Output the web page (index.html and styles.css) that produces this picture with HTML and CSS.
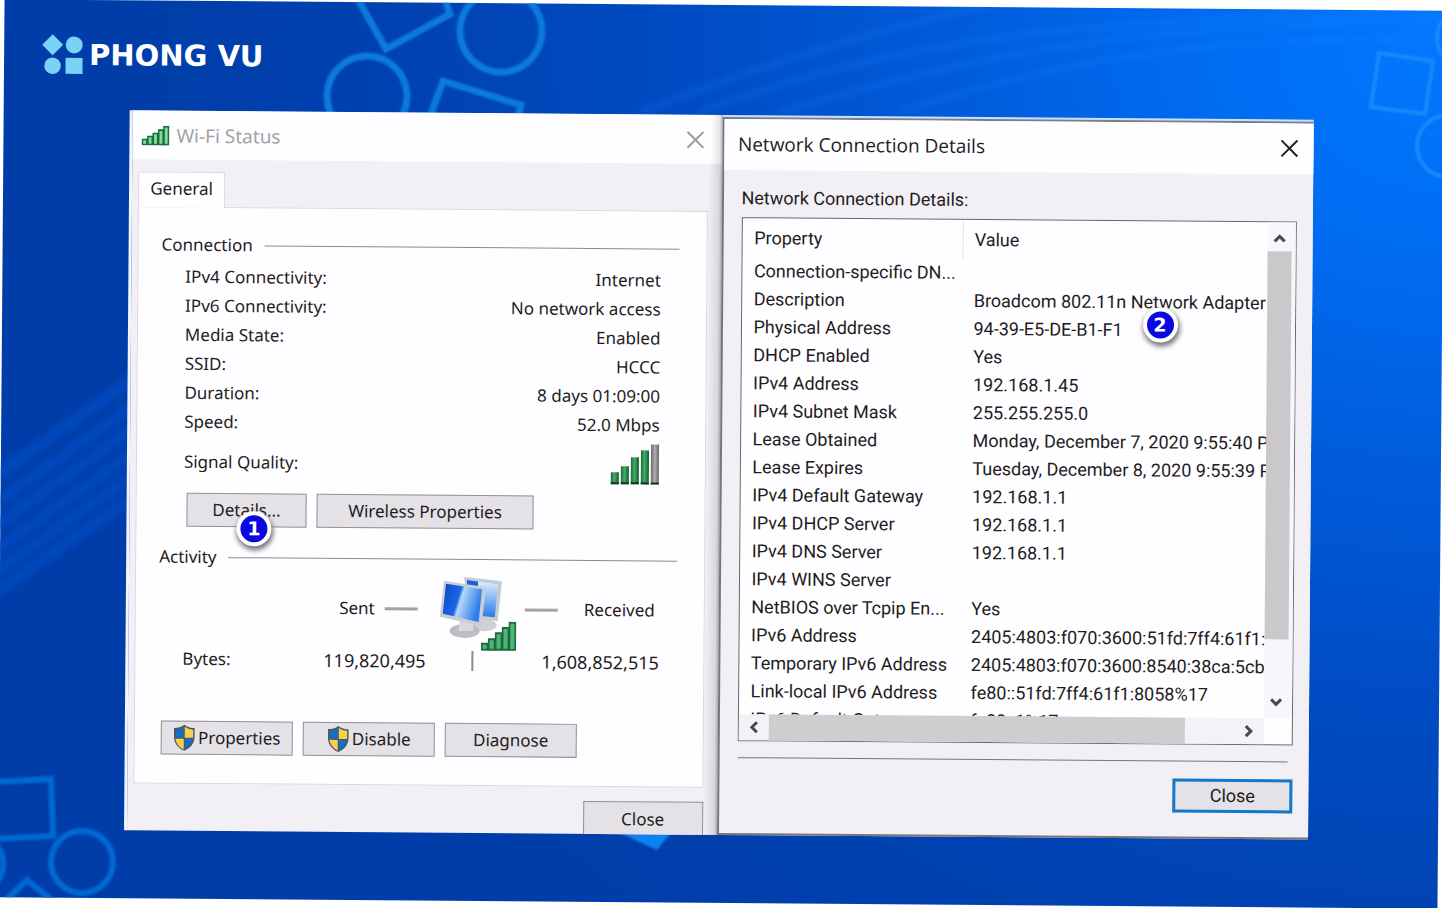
FILE: index.html
```html
<!DOCTYPE html>
<html lang="en">
<head>
<meta charset="utf-8">
<meta name="viewport" content="width=device-width, initial-scale=1">
<title>Phong Vu - Network Connection Details</title>
<link rel="stylesheet" href="styles.css">
</head>
<body>
<svg class="defs" width="0" height="0" aria-hidden="true">
  <symbol id="shield" viewBox="0 0 24 30">
    <path d="M12 1C9 3.500 5 4.500 1 4.500V14c0 7 4.500 12 11 15 6.500-3 11-8 11-15V4.500C19 4.500 15 3.500 12 1z" fill="#4a5560"/>
    <path d="M11.500 3C9 5 6 6 2.500 6.200V15h9z" fill="#1a6dbb"/>
    <path d="M12.500 3C15 5 18 6 21.500 6.200V15h-9z" fill="#fbcf4e"/>
    <path d="M2.600 16c.5 5 4 9 8.900 11.500V16z" fill="#fbcf4e"/>
    <path d="M21.400 16c-.5 5-4 9-8.900 11.500V16z" fill="#1a6dbb"/>
  </symbol>
  <symbol id="bars" viewBox="0 0 28 20">
    <g fill="#7fdc9c" stroke="#1c6b3c" stroke-width="1.600">
      <rect x="1" y="14" width="4.500" height="5"/>
      <rect x="6.400" y="11" width="4.500" height="8"/>
      <rect x="11.800" y="8" width="4.500" height="11"/>
      <rect x="17.200" y="4.500" width="4.500" height="14.500"/>
      <rect x="22.500" y="1" width="4.500" height="18"/>
    </g>
  </symbol>
</svg>

<main class="stage">
  <svg class="backdrop" viewBox="0 0 1440 898" preserveAspectRatio="xMidYMid slice" aria-hidden="true">
    <defs>
      <filter id="soft"><feGaussianBlur stdDeviation="1"/></filter>
      <filter id="softer"><feGaussianBlur stdDeviation="3"/></filter>
    </defs>
    <g transform="rotate(-0.45 720 449) translate(-1 -5)" fill="none">
      <g stroke="#0047bd" stroke-width="12" filter="url(#softer)">
        <path d="M-10 480L140 374M-10 507L140 401M-10 530L140 424M-10 554L140 448M-10 576L140 470M-10 596L140 492"/>
      </g>
      <g stroke="#1a86ff" stroke-width="6" opacity=".25" filter="url(#softer)">
        <path d="M640 112C800 50 960 5 1080 -10M700 112C880 45 1060 15 1442 15M780 112C960 60 1120 22 1442 22M900 112C1060 60 1200 35 1442 40"/>
      </g>
      <g stroke="#0879dd" stroke-width="7" filter="url(#soft)">
        <circle cx="367" cy="96" r="40"/>
        <circle cx="501" cy="31" r="41"/>
        <path d="M356 -4L386 49L450 14L444 -4"/>
        <path d="M428 122L443 81L521 105L517 122"/>
      </g>
      <g stroke="#1a88ff" stroke-width="4" filter="url(#soft)">
        <path d="M1379 53L1433 61L1425 114L1371 107Z"/>
        <circle cx="1448" cy="146" r="31"/>
        <circle cx="1468" cy="38" r="31"/>
      </g>
      <g stroke="#0069d4" stroke-width="6" filter="url(#soft)">
        <path d="M-6 782L51 779L53 836L-6 839"/>
        <circle cx="82" cy="862" r="31"/>
        <circle cx="-28" cy="864" r="31"/>
        <path d="M6 900L27 880L54 902"/>
      </g>
      <path d="M622 834L670 834L657 850Z" fill="#0c82f2" filter="url(#soft)"/>
    </g>
  </svg>

  <header class="brand">
    <svg class="brand-mark" viewBox="0 0 42 42" aria-hidden="true">
      <g fill="#7ad3f4">
        <path d="M10.500 0.500L21 11L10.500 21.500L0 11Z"/>
        <circle cx="32" cy="11" r="8.500"/>
        <circle cx="10.500" cy="32" r="8.300"/>
        <rect x="23.500" y="24" width="17" height="16"/>
      </g>
    </svg>
    <span class="brand-name">PHONG VU</span>
  </header>

  <div class="shots">
    <section class="win status" aria-label="Wi-Fi Status">
      <div class="titlebar">
        <svg class="title-icon" aria-hidden="true"><use href="#bars"/></svg>
        <h1 class="title muted">Wi-Fi Status</h1>
        <button class="x muted" type="button" aria-label="Close Wi-Fi Status"><svg viewBox="0 0 18 18"><path d="M1 1L17 17M17 1L1 17"/></svg></button>
      </div>
      <div class="status-body">
        <button class="tab" type="button">General</button>
        <div class="panel">
          <h2 class="group">Connection</h2>
          <dl class="facts">
            <div><dt>IPv4 Connectivity:</dt><dd>Internet</dd></div>
            <div><dt>IPv6 Connectivity:</dt><dd>No network access</dd></div>
            <div><dt>Media State:</dt><dd>Enabled</dd></div>
            <div><dt>SSID:</dt><dd>HCCC</dd></div>
            <div><dt>Duration:</dt><dd>8 days 01:09:00</dd></div>
            <div><dt>Speed:</dt><dd>52.0 Mbps</dd></div>
            <div class="signal"><dt>Signal Quality:</dt><dd>
              <svg class="quality" viewBox="0 0 50 42" role="img" aria-label="4 of 5 bars">
                <defs><linearGradient id="green"><stop offset="0" stop-color="#1c6b36"/><stop offset=".45" stop-color="#3fae68"/><stop offset="1" stop-color="#145a2c"/></linearGradient>
                <linearGradient id="grey"><stop offset="0" stop-color="#6a6a6a"/><stop offset=".5" stop-color="#b0aeb0"/><stop offset="1" stop-color="#666"/></linearGradient></defs>
                <g fill="url(#green)">
                  <rect x="1" y="29" width="8" height="12"/><rect x="11" y="23" width="8" height="18"/>
                  <rect x="21" y="14" width="8" height="27"/><rect x="31" y="7" width="8" height="34"/>
                </g>
                <rect x="41" y="1" width="8" height="40" fill="url(#grey)"/>
                <path d="M1 40h8M11 40h8M21 40h8M31 40h8M41 40h8" stroke="#12351f" stroke-width="2"/>
              </svg></dd></div>
          </dl>
          <div class="row details-row">
            <div class="marked">
              <button class="btn details" type="button">Details...</button>
              <span class="badge one">1</span>
            </div>
            <button class="btn wireless" type="button">Wireless Properties</button>
          </div>
          <h2 class="group activity">Activity</h2>
          <div class="traffic">
            <div class="side sent"><span>Sent</span><i></i></div>
            <svg class="computers" viewBox="0 0 78 76" aria-hidden="true">
              <defs>
                <linearGradient id="scr" x2="1" y2=".3"><stop offset="0" stop-color="#0b47cc"/><stop offset=".46" stop-color="#1c66e2"/><stop offset=".54" stop-color="#b4d8fb"/><stop offset="1" stop-color="#2f7dea"/></linearGradient>
                <linearGradient id="scr2" x2="0" y2="1"><stop offset="0" stop-color="#e2f2ff"/><stop offset="1" stop-color="#2a7be6"/></linearGradient>
              </defs>
              <ellipse cx="44" cy="49" rx="13" ry="6" fill="#cfcfd4"/>
              <path d="M24 1L62 5L58 45L30 42Z" fill="#c6cad2"/>
              <path d="M27 4L58 8L55 41L32 39Z" fill="url(#scr2)"/>
              <path d="M27 4L38 5.400L38 14L27 14Z" fill="#1f5fdc"/>
              <ellipse cx="25" cy="55" rx="15" ry="7" fill="#bdbcc2"/>
              <path d="M20 42h13l1 13H19z" fill="#d9d9dd"/>
              <path d="M4 5L46 11L42 50L0 41Z" fill="#c9cdd5"/>
              <path d="M6 8L42 13L39 46L3 38Z" fill="url(#scr)"/>
              <svg x="41" y="45" width="36" height="30" viewBox="0 0 28 20" preserveAspectRatio="none">
                <g fill="#4fb579" stroke="#1c6b3c" stroke-width="1.300">
                  <rect x="1" y="15" width="4.500" height="4"/><rect x="6.400" y="12" width="4.500" height="7"/>
                  <rect x="11.800" y="8" width="4.500" height="11"/><rect x="17.200" y="4.500" width="4.500" height="14.500"/>
                  <rect x="22.500" y="1" width="4.500" height="18"/>
                </g>
              </svg>
            </svg>
            <div class="side received"><i></i><span>Received</span></div>
          </div>
          <div class="bytes">
            <span class="bytes-label">Bytes:</span><span class="num">119,820,495</span><i class="bar"></i><span class="num">1,608,852,515</span>
          </div>
          <div class="row actions">
            <button class="btn" type="button"><svg class="shield" aria-hidden="true"><use href="#shield"/></svg>Properties</button>
            <button class="btn" type="button"><svg class="shield" aria-hidden="true"><use href="#shield"/></svg>Disable</button>
            <button class="btn" type="button">Diagnose</button>
          </div>
        </div>
        <button class="btn close-status" type="button">Close</button>
      </div>
    </section>

    <section class="win connection" aria-label="Network Connection Details">
      <div class="titlebar">
        <h1 class="title">Network Connection Details</h1>
        <button class="x" type="button" aria-label="Close Network Connection Details"><svg viewBox="0 0 18 18"><path d="M1 1L17 17M17 1L1 17"/></svg></button>
      </div>
      <div class="connection-body">
        <p class="list-label" id="list-label">Network Connection Details:</p>
        <div class="listbox">
          <div class="view">
            <table aria-labelledby="list-label">
              <thead><tr><th>Property</th><th>Value</th></tr></thead>
              <tbody>
                <tr><td>Connection-specific DN...</td><td></td></tr>
                <tr><td>Description</td><td>Broadcom 802.11n Network Adapter</td></tr>
                <tr><td>Physical Address</td><td>94-39-E5-DE-B1-F1<span class="badge two">2</span></td></tr>
                <tr><td>DHCP Enabled</td><td>Yes</td></tr>
                <tr><td>IPv4 Address</td><td>192.168.1.45</td></tr>
                <tr><td>IPv4 Subnet Mask</td><td>255.255.255.0</td></tr>
                <tr><td>Lease Obtained</td><td>Monday, December 7, 2020 9:55:40 PM</td></tr>
                <tr><td>Lease Expires</td><td>Tuesday, December 8, 2020 9:55:39 PM</td></tr>
                <tr><td>IPv4 Default Gateway</td><td>192.168.1.1</td></tr>
                <tr><td>IPv4 DHCP Server</td><td>192.168.1.1</td></tr>
                <tr><td>IPv4 DNS Server</td><td>192.168.1.1</td></tr>
                <tr><td>IPv4 WINS Server</td><td></td></tr>
                <tr><td>NetBIOS over Tcpip En...</td><td>Yes</td></tr>
                <tr><td>IPv6 Address</td><td>2405:4803:f070:3600:51fd:7ff4:61f1:8058</td></tr>
                <tr><td>Temporary IPv6 Address</td><td>2405:4803:f070:3600:8540:38ca:5cbb</td></tr>
                <tr><td>Link-local IPv6 Address</td><td>fe80::51fd:7ff4:61f1:8058%17</td></tr>
                <tr><td>IPv6 Default Gateway</td><td>fe80::1%17</td></tr>
              </tbody>
            </table>
          </div>
          <div class="vscroll">
            <svg viewBox="0 0 14 14"><path d="M2 10L7 5L12 10"/></svg>
            <span class="thumb"></span>
            <svg viewBox="0 0 14 14"><path d="M2 4L7 9L12 4"/></svg>
          </div>
          <div class="hscroll">
            <svg viewBox="0 0 14 14"><path d="M10 2L5 7L10 12"/></svg>
            <span class="thumb"></span>
            <svg viewBox="0 0 14 14"><path d="M4 2L9 7L4 12"/></svg>
          </div>
        </div>
        <hr class="rule">
        <button class="btn close-connection" type="button">Close</button>
      </div>
    </section>
  </div>
</main>
</body>
</html>
```
FILE: styles.css
```css
* { box-sizing: border-box; }

body {
  margin: 0;
  background: #fff;
  overflow: hidden;
  color: #1e1c22;
  font: 17px/28px "Noto Sans", sans-serif;
}

h1, h2, p, dl, dd { margin: 0; font: inherit; }
button { font: inherit; color: inherit; }
.defs { position: absolute; }

/* Slightly tilted poster */
.stage {
  position: relative;
  margin: 5px 1px;
  min-height: calc(100vh - 10px);
  overflow: hidden;
  transform: rotate(0.45deg);
  background: radial-gradient(ellipse 1500px 1300px at 100% 4%, #0078ff 0%, #006cf2 16%, #005cdc 32%, #004cc4 50%, #0042b2 68%, #003da8 88%);
}
.backdrop { position: absolute; inset: 0; width: 100%; height: 100%; }

.brand {
  position: relative;
  display: flex;
  align-items: center;
  gap: 5px;
  height: 110px;
  padding: 0 0 0 38px;
}
.brand-mark { width: 42px; height: 42px; }
.brand-name { color: #fff; font: bold 29px/32px "DejaVu Sans", sans-serif; }

.shots {
  position: relative;
  display: flex;
  margin: 0 130px 0 126px;
  height: 720px;
}
.win { background: #f2f0f4; min-width: 0; flex: 1; }
.status {
  overflow: hidden;
  border-left: 3px solid #f0f6fd;
  background: linear-gradient(to left, #a9a9ad 0, #d8d7db 3px, #f2f0f4 14px);
}
.connection {
  border: 2px solid #76767c;
  border-right: 0;
  border-top-color: #74808e;
  box-shadow: 0 -2px 0 #c9e0f8;
  margin-top: 2px;
}

.titlebar {
  display: flex;
  align-items: center;
  height: 49px;
  padding: 0 18px 0 9px;
  background: linear-gradient(to left, #b9b9bd 0, #e6e5e9 3px, #fefdff 12px);
}
.connection .titlebar { height: 51px; padding: 0 15px 2px 14px; background: #fefdff; }
.title-icon { width: 28px; height: 20px; margin-right: 7px; }
.title { font-size: 19px; flex: 1; }
.connection .title { font-family: "Open Sans", sans-serif; }
.title.muted { color: #a3a1a6; }
.x { width: 18px; height: 18px; padding: 0; border: 0; background: none; stroke: #222; stroke-width: 2; }
.x svg { display: block; width: 18px; height: 18px; }
.x.muted { stroke: #9c9a9f; }

.status-body { padding: 12px 14px 0 6px; }
.tab {
  display: block;
  position: relative;
  width: 87px;
  height: 36px;
  margin-bottom: -1px;
  padding: 0 0 3px;
  background: #fefdff;
  border: 1px solid #dcd8de;
  border-bottom: 0;
}
.panel {
  border: 1px solid #dcd8de;
  background: #fefdff;
  height: 577px;
  padding: 23px 27px 0 23px;
}
.group { display: flex; align-items: center; gap: 12px; }
.group::after { content: ""; flex: 1; height: 1px; background: #8c8a90; }

.facts { padding: 3px 18px 0 24px; line-height: 29px; }
.facts > div { display: flex; justify-content: space-between; }
.facts .signal { align-items: center; height: 50px; }
.signal svg { display: block; }
.quality { width: 50px; height: 42px; }

.row { display: flex; gap: 10px; }
.details-row { padding: 7px 0 0 27px; }
.marked { position: relative; }
.btn {
  display: flex;
  align-items: center;
  justify-content: center;
  width: 132px;
  height: 34px;
  padding: 0;
  background: #e4e2e6;
  border: 1px solid #949297;
}
.btn.details { width: 120px; }
.btn.wireless { width: 217px; }

.badge {
  position: absolute;
  width: 35px;
  height: 35px;
  border: 4px solid #fff;
  border-radius: 50%;
  background: #0a08e0;
  color: #fff;
  font: bold 19px/27px "DejaVu Sans", sans-serif;
  text-align: center;
  box-shadow: 1px 3px 5px 1px #77757c;
}
.badge.one { left: 50px; top: 18px; }
.badge.two { left: 180px; top: -9px; }

.activity { margin-top: 16px; }
.traffic { display: grid; grid-template-columns: 259px 78px 1fr; align-items: start; padding-top: 3px; margin-left: 22px; }
.side { display: flex; align-items: center; margin-top: 19px; }
.side i { width: 33px; height: 3px; background: #a3a1a6; }
.sent { justify-content: flex-end; gap: 10px; padding-right: 22px; }
.received { gap: 26px; padding-left: 7px; }
.computers { display: block; width: 78px; height: 76px; }

.bytes { display: flex; align-items: center; height: 28px; margin: -5px 17px 0 24px; }
.bytes-label { width: 141px; }
.bytes .num { font-size: 18px; }
.bytes .bar { width: 2px; height: 20px; background: #8c8a90; margin-left: 46px; }
.bytes .num:last-child { margin-left: auto; }

.actions { margin: 48px 0 0 3px; }
.shield { width: 23px; height: 28px; margin-right: 2px; }
.close-status { width: 120px; margin: 14px 0 0 auto; border-bottom: 0; }

/* Details window */
.connection-body { padding: 14px 16px 0 18px; font: 18px/28px Roboto, sans-serif; }
.listbox {
  display: grid;
  grid-template-columns: 1fr 28px;
  grid-template-rows: 1fr 26px;
  height: 524px;
  margin-top: 5px;
  border: 1px solid #68666c;
  background: #fefdff;
}
.view { overflow: hidden; min-width: 0; }
table { width: 100%; table-layout: fixed; border-collapse: collapse; }
th, td { height: 28px; padding: 0 0 0 12px; text-align: left; font-weight: 400; white-space: nowrap; position: relative; }
th { height: 39px; }
th:first-child { width: 221px; border-right: 1px solid #e3e1e6; }
td:nth-child(2), th:nth-child(2) { padding-left: 11px; }
.vscroll, .hscroll { display: flex; align-items: center; justify-content: space-between; }
.vscroll { flex-direction: column; padding: 9px 4px 9px 0; background: #f8f6fa; }
.hscroll { padding: 0 8px 0 8px; background: #f4f2f6; }
.vscroll svg, .hscroll svg { width: 14px; height: 14px; fill: none; stroke: #4a484e; stroke-width: 3; }
.vscroll .thumb { width: 100%; flex: 0 0 388px; margin-bottom: 50px; background: #cac8cb; }
.hscroll .thumb { height: 100%; flex: 0 0 416px; margin-right: 48px; background: #cfcdd0; }

.rule { height: 1px; margin: 16px 5px 0 0; border: 0; background: #77757b; }
.close-connection { width: 120px; margin: 17px 0 0 auto; border: 3px solid #1378c8; background: #e4e2e6; }
```
